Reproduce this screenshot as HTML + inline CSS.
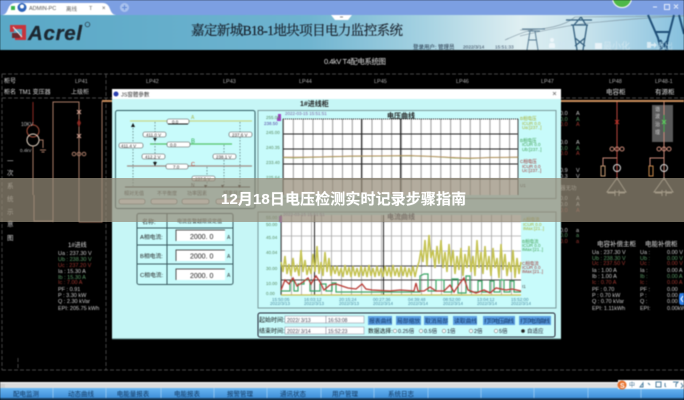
<!DOCTYPE html>
<html lang="zh"><head><meta charset="utf-8"><title>12月18日电压检测实时记录步骤指南</title>
<style>
html,body{margin:0;padding:0;background:#000;width:684px;height:400px;overflow:hidden}
svg{position:absolute;left:0;top:0;display:block}
#m{filter:blur(.55px)}
text{font-family:"Liberation Sans","Noto Sans CJK SC",sans-serif}
.s{font-family:"Liberation Serif","Noto Serif CJK SC",serif}
.w{fill:#ddd;font-size:6px}
.b{fill:#1c2c50;font-size:6.5px}
#band{position:absolute;left:0;top:178px;width:684px;height:44px;background:rgba(150,140,120,.72)}
#title{position:absolute;left:221px;top:189px;width:250px;white-space:nowrap;color:#fff;font:bold 15px/22px "Liberation Sans","Noto Sans CJK SC",sans-serif;letter-spacing:.1px;text-shadow:0 0 1px rgba(255,255,255,.5)}
</style></head><body>
<svg id="m" width="684" height="400" viewBox="0 0 684 400" xmlns="http://www.w3.org/2000/svg">
<defs>
<linearGradient id="h" x1="0" x2="1" y1="0" y2="0">
<stop offset="0" stop-color="#5aa8c6"/><stop offset=".45" stop-color="#6fb4d0"/><stop offset=".62" stop-color="#a5d2e2"/><stop offset=".76" stop-color="#dfeff2"/><stop offset=".86" stop-color="#c6e2ec"/><stop offset="1" stop-color="#86c0de"/>
</linearGradient>
<linearGradient id="t" x1="0" x2="0" y1="0" y2="1"><stop offset="0" stop-color="#69b6f2"/><stop offset="1" stop-color="#3f8fd8"/></linearGradient>
<pattern id="g1" x="283" y="0" width="9.83" height="400" patternUnits="userSpaceOnUse"><rect width="1" height="400" fill="#9a9a9a"/></pattern>
<pattern id="g2" x="281" y="0" width="10" height="400" patternUnits="userSpaceOnUse"><rect width="1" height="400" fill="#b4b4b4"/></pattern>
</defs>
<rect width="684" height="400" fill="#000"/>
<!-- top bar -->
<rect width="684" height="15" fill="#7c9fe2"/>
<path d="M2 15Q6 15 8 9Q10 3 15 3H103Q108 3 110 9Q112 15 116 15Z" fill="#fff"/>
<rect x="11" y="6" width="4" height="4" fill="#39b54a"/>
<circle cx="22" cy="7.500" r="4.500" fill="#2c62b8"/><circle cx="22" cy="6.500" r="2" fill="#fff"/>
<text x="29" y="10" font-size="5.500" fill="#555">ADMIN-PC</text>
<text x="66" y="11" font-size="5.500" fill="#666">离线</text>
<text x="89" y="10" font-size="5.500" fill="#666">T</text><text x="102" y="10" font-size="6" fill="#555">×</text>
<circle cx="124.500" cy="7.500" r="4.500" fill="#a9c2ee"/><path d="M122 7.500h5M124.500 5v5" stroke="#5f86d4" stroke-width="1"/>
<circle cx="622" cy="-2" r="9.500" fill="#4eb848" stroke="#fff" stroke-width="1"/>
<path d="M653 7h4M664.500 4.500h5v5h-5zM674 4.500l4 4M678 4.500l-4 4" stroke="#e6eefc" stroke-width="1" fill="none"/>
<!-- header -->
<rect y="15" width="684" height="35" fill="url(#h)"/>
<path d="M331 15H352L348 20H335Z" fill="#fff"/><path d="M340 17h3" stroke="#888"/>
<!-- towers -->
<g fill="none" stroke="#3e6484" stroke-width="1">
<path d="M520 36Q570 24 600 22Q640 18 684 16M520 30Q560 30 575 17M575 17L684 16M505 40Q525 31 533 30" stroke="#7a8f9c" stroke-width=".6"/>
<path d="M522 29H545M528 31H540M530 31L527 50M535 31L538 50M528 40H537" stroke="#5a7d94"/>
<path d="M566 20H592M571 25H588M574 25L581 17M586 25L581 17M573 25L577 50M587 25L583 50M575 38L585 46M585 38L575 46" stroke="#35607f" stroke-width="1.300"/>
<path d="M648 15L658 38L661 50M674 15L668 38L666 50M656 32H670M660 40L668 50M668 40L660 50M679 15L684 34" stroke="#1f4f78" stroke-width="2"/>
</g>
<!-- logo -->
<path d="M10 25H26V40H15V36H22V29H14V32H10Z" fill="#c8343c"/><path d="M12 33H20V38H12Z" fill="#6d2a30"/><path d="M13 27L22 37" stroke="#eee" stroke-width="1"/>
<text x="28" y="40" font-size="20.500" font-weight="bold" font-style="italic" fill="#1c2730" stroke="#1c2730" stroke-width=".3" textLength="54">Acrel</text>
<circle cx="87.500" cy="24.500" r="2.300" fill="none" stroke="#24313c" stroke-width=".7"/>
<text class="s" x="191" y="35" font-size="13.500" fill="#141a24" stroke="#141a24" stroke-width=".15" textLength="212" lengthAdjust="spacing">嘉定新城B18-1地块项目电力监控系统</text>
<text x="413" y="49" font-size="5.500" fill="#1d2c40">登录用户: 管理员</text>
<text x="463" y="48.500" font-size="4.800" fill="#2c3c50">2022/3/14</text><text x="495" y="48.500" font-size="4.800" fill="#3c5068">15:51:33</text>
<path d="M549 48V45Q549 43 551 43H553Q555 43 555 45V48ZM550 40a2 2 0 1 0 4 0a2 2 0 1 0-4 0" fill="#edf6fa"/>
<text x="557" y="49" font-size="9" fill="#cfe6f0">登录</text>
<rect x="595" y="43" width="7" height="6" fill="#e8f3f8"/><text x="603" y="49" font-size="9" fill="#cfe6f0">最小化</text>
<path d="M647 42h4v2h3v-2l3 3-3 3v-2h-3v2h-4z" fill="#d8ebf4"/><text x="656" y="49" font-size="8.500" fill="#b5d8e8">退出</text>
<!-- schematic frame -->
<text x="324" y="64" font-size="7.500" fill="#ddd" textLength="62">0.4kV T4配电系统图</text>
<g stroke="#5c5c5c" stroke-width=".7" stroke-dasharray="4 2" fill="none">
<path d="M2 74H684M2 98H684M2 370H684M2 74V370M106 74V370M18 358V370"/>
</g>
<text x="4" y="83" font-size="6" fill="#ddd">柜号</text><text x="4" y="94" font-size="6" fill="#ddd">柜名</text><text x="19" y="94" font-size="6" fill="#ddd">TM1 变压器</text>
<text x="75" y="83" font-size="5.500" fill="#aaa">LP41</text><text x="71" y="94" font-size="6" fill="#ccc">上级柜</text>
<text x="146" y="83" font-size="5.500" fill="#aaa">LP42</text><text x="223" y="83" font-size="5.500" fill="#aaa">LP43</text><text x="299" y="83" font-size="5.500" fill="#aaa">LP44</text><text x="374" y="83" font-size="5.500" fill="#aaa">LP45</text><text x="456" y="83" font-size="5.500" fill="#aaa">LP46</text><text x="541" y="83" font-size="5.500" fill="#aaa">LP47</text>
<text x="609" y="83" font-size="5.500" fill="#aaa">LP48</text><text x="655" y="83" font-size="5.500" fill="#aaa">LP48-1</text>
<text x="606" y="94" font-size="6.500" fill="#ddd">电容柜</text><text x="655" y="94" font-size="6.500" fill="#ddd">有源柜</text>
<!-- left schematic -->
<path d="M102 101H684" stroke="#c98d5c" stroke-width="2"/>
<g fill="none" stroke="#a87a66" stroke-width="1">
<path d="M53 222V102H79V222M79 222H102V101M34 195V221H53"/>
<path d="M33 102V125" stroke="#8b2a22"/>
<circle cx="33" cy="131" r="6" stroke="#a8503c"/><circle cx="33" cy="140" r="6" stroke="#e8d8c8"/>
<path d="M33 146V195M39 140H43V148M40 150H46M41.500 152H44.500"/>
<path d="M79 112l-2-2M79 112l2-2M79 112l-2 2M79 112l2 2M79 136l-2-2M79 136l2-2M79 136l-2 2M79 136l2 2" stroke="#d8a898"/>
<path d="M79 120l-1.500 3 1.500 3 1.500-3z" fill="#8b2a22" stroke="#8b2a22"/>
<circle cx="74" cy="154" r="1.800"/><circle cx="79" cy="154" r="1.800"/><circle cx="84" cy="154" r="1.800"/>
</g>
<text x="21" y="126" font-size="5" fill="#bbb">10KV</text><text x="20" y="152" font-size="4.500" fill="#bbb">0.4kV</text>
<g font-size="6.500" fill="#ccc"><text x="7" y="163">一</text><text x="7" y="175">次</text><text x="7" y="188">系</text><text x="7" y="201">统</text><text x="7" y="214">示</text><text x="7" y="226">意</text><text x="7" y="240">图</text></g>
<text x="68" y="247" class="w">1#进线</text>
<g font-size="5.500"><text x="58" y="255" fill="#ccc">Ua :  237.30 V</text><text x="58" y="261" fill="#5c9c68">Ub :  238.30 V</text><text x="58" y="267" fill="#a03830">Uc :  237.20 V</text><text x="58" y="273" fill="#ccc">Ia :   15.30 A</text><text x="58" y="279" fill="#5c9c68">Ib :   15.30 A</text><text x="58" y="284" fill="#a03830">Ic :    7.00 A</text><text x="58" y="291" fill="#ccc">PF :     0.91</text><text x="58" y="297" fill="#ccc">P  :    3.30 kW</text><text x="58" y="303" fill="#ccc">Q  :    2.30 kVar</text><text x="58" y="310" fill="#ccc">EPI:  205.75 kWh</text></g>
<!-- right schematic -->
<g font-size="5.500">
<text x="560" y="115" fill="#ccc">0.0</text><text x="576" y="115" fill="#ccc">A</text><text x="560" y="121" fill="#5c9c68">0.0</text><text x="576" y="121" fill="#5c9c68">A</text><text x="560" y="126" fill="#a03830">0.0</text><text x="576" y="126" fill="#a03830">A</text>
<text x="560" y="144" fill="#ccc">0.0</text><text x="576" y="144" fill="#ccc">A</text><text x="560" y="150" fill="#5c9c68">0.0</text><text x="576" y="150" fill="#5c9c68">A</text><text x="560" y="155" fill="#a03830">0.0</text><text x="576" y="155" fill="#a03830">A</text>
<text x="560" y="172" fill="#ccc">0.9</text><text x="576" y="172" fill="#ccc">V</text><text x="560" y="178" fill="#ccc">0.3</text><text x="576" y="178" fill="#ccc">V</text><text x="560" y="190" fill="#ccc">器无功</text>
<text x="560" y="200" fill="#ccc">0.0</text><text x="576" y="200" fill="#ccc">A</text><text x="560" y="206" fill="#ccc">0.0</text><text x="576" y="206" fill="#ccc">A</text><text x="560" y="212" fill="#a03830">0.0</text><text x="576" y="212" fill="#a03830">A</text>
<text x="560" y="232" fill="#ccc">0.0</text><text x="576" y="232" fill="#ccc">a</text><text x="560" y="237" fill="#5c9c68">0.0</text><text x="576" y="237" fill="#5c9c68">a</text><text x="560" y="243" fill="#a03830">0.0</text><text x="576" y="243" fill="#a03830">a</text>
</g>
<rect x="652" y="105" width="21" height="37" fill="#5a5a5a"/>
<g font-size="5" fill="#ccc"><text x="655" y="111">谐</text><text x="655" y="118">波</text><text x="655" y="126">治</text><text x="655" y="134">理</text></g>
<g fill="none" stroke="#c98a78" stroke-width="1">
<path d="M617 102V180" stroke="#b6473c"/><path d="M664 102V115"/><path d="M664 115V132" stroke="#44b04e"/><path d="M664 132V180"/>
<path d="M615 120l4 4M619 120l-4 4" stroke="#c03028"/><path d="M662 120l4 4M666 120l-4 4" stroke="#5fd05f"/>
<circle cx="612" cy="149" r="2"/><circle cx="617" cy="149" r="2"/><circle cx="622" cy="149" r="2"/><circle cx="659" cy="149" r="2"/><circle cx="664" cy="149" r="2"/><circle cx="669" cy="149" r="2"/>
<circle cx="617" cy="168" r="3.500" stroke="#ddd"/><circle cx="664" cy="168" r="3.500" stroke="#ddd"/>
<path d="M617 158H603V166M664 158H650V166"/><rect x="601" y="166" width="4" height="10" stroke="#c49a72"/><rect x="649" y="166" width="4" height="10" stroke="#c98a4a"/>
<path d="M617 178L607 192H626ZM664 178L654 192H673Z" stroke="#c0b8a8"/><path d="M608 192V193H615M619 193H625M655 193H662M666 193H672M615 190V196M619 190V196M662 190V196M666 190V196" stroke="#c0b8a8"/>
</g>
<text x="597" y="246" font-size="6.500" fill="#ddd">电容补偿主柜</text><text x="645" y="246" font-size="6.500" fill="#ddd">电能补偿柜</text>
<g font-size="5.500">
<text x="592" y="254" fill="#ccc">Ua :  237.30 V</text><text x="592" y="260" fill="#5c9c68">Ub :  238.30 V</text><text x="592" y="265" fill="#a03830">Uc :  237.50 V</text><text x="592" y="272" fill="#ccc">Ia :    1.00 A</text><text x="592" y="278" fill="#ccc">Ib :    1.00 A</text><text x="592" y="284" fill="#a03830">Ic :    0.70 A</text><text x="592" y="291" fill="#ccc">PF :    0.70</text><text x="592" y="297" fill="#ccc">P  :    0.70 kW</text><text x="592" y="303" fill="#ccc">Q  :    0.70 kVar</text><text x="592" y="310" fill="#ccc">EPI:    1.11kWh</text>
<text x="640" y="254" fill="#ccc">Ua :</text><text x="667" y="254" fill="#ccc">0.00 V</text><text x="640" y="260" fill="#5c9c68">Ub :</text><text x="667" y="260" fill="#5c9c68">0.00 V</text><text x="640" y="265" fill="#a03830">Uc :</text><text x="667" y="265" fill="#a03830">0.00 V</text><text x="640" y="272" fill="#ccc">Ia :</text><text x="667" y="272" fill="#ccc">0.00 A</text><text x="640" y="278" fill="#5c9c68">Ib :</text><text x="667" y="278" fill="#5c9c68">0.00 A</text><text x="640" y="284" fill="#a03830">Ic :</text><text x="667" y="284" fill="#a03830">0.00 A</text><text x="640" y="291" fill="#ccc">PF :</text><text x="667" y="291" fill="#ccc">0.00</text><text x="640" y="297" fill="#ccc">P  :</text><text x="667" y="297" fill="#ccc">0.00 kW</text><text x="640" y="303" fill="#ccc">Q  :</text><text x="667" y="303" fill="#ccc">0.00 kVar</text><text x="640" y="310" fill="#ccc">EPI:</text><text x="667" y="310" fill="#ccc">0.00kWh</text>
</g>
<path d="M684 293H682Q679 293 679 296V302Q679 305 682 305H684Z" fill="#2f7fe8"/><path d="M683 296l-2 3 2 3" stroke="#fff" fill="none"/>
<!-- bottom -->
<rect y="382" width="684" height="1.500" fill="#f2f2f2"/>
<rect y="383.500" width="684" height="5" fill="#cfcfcf"/><rect x="5" y="384" width="658" height="4" fill="#dcdcdc"/>
<rect y="388" width="684" height="10" fill="url(#t)"/><rect y="398" width="684" height="2" fill="#1a4266"/>
<path d="M53 388v10M106 388v10M161 388v10M214 388v10M267 388v10M321 388v10M374 388v10M428 388v10M481 388v10M534 388v10M588 388v10M641 388v10" stroke="#a6d2f6" stroke-width=".7"/>
<g font-size="6.500" fill="#10345c" text-anchor="middle"><text x="26" y="396">配电监测</text><text x="81" y="396">动态曲线</text><text x="133" y="396">电能量报表</text><text x="187" y="396">电能报表</text><text x="240" y="396">报警管理</text><text x="293" y="396">通讯状态</text><text x="345" y="396">用户管理</text><text x="401" y="396">系统日志</text></g>
<rect x="618" y="380" width="66" height="9" fill="#fff"/>
<circle cx="622" cy="385" r="4.500" fill="#e8702a"/><text x="620" y="388" font-size="7" font-weight="bold" fill="#fff">S</text>
<g font-size="6" fill="#3f6f90"><text x="629" y="387">中</text></g>
<path d="M640 387l3-4v4zM648 383l2 2M656 382h5v5h-5zM665 383v3l1 1M673 382h5l-2 2v3M681 383l2 3-2 2" stroke="#4f7f9f" fill="none" stroke-width="1"/>
<!-- dialog -->
<rect x="112" y="89" width="449" height="250" fill="#c6f6f6"/>
<rect x="112" y="89" width="449" height="10" fill="#fff"/>
<path d="M112 339H561" stroke="#4a6a6a"/>
<circle cx="116" cy="94" r="2.500" fill="#2a3fb0"/><text x="121" y="96.500" font-size="5.500" fill="#333">JS窗體參數</text>
<path d="M553 92l3 3M556 92l-3 3" stroke="#777" stroke-width=".8"/>
<!-- left panel -->
<rect x="115.500" y="110.500" width="139.500" height="98" rx="2" fill="#c8fbfb" stroke="#2f5a60"/>
<path d="M130 121H252" stroke="#c9d98a" stroke-width="1.200"/><path d="M150 144H232" stroke="#55c46a" stroke-width="1.200"/><path d="M127 166H252" stroke="#a08a84" stroke-width="1.200"/><path d="M125 187H250" stroke="#444" stroke-width="1"/>
<path d="M133 128V186M155 122V166M207 167V186M224 145V186M240 122V186" stroke="#789a9c" stroke-dasharray="1.500 1.500" fill="none"/>
<path d="M133 123l-2 4h4zM155 141l-2-3h4zM155 166l-2-4h4zM204 185h3l-1.500 3zM224 185h-3l1.500 3zM241 185h-3l1.500 3z" fill="#111"/>
<g fill="#fff" stroke="#555" stroke-width=".6"><rect x="167" y="119" width="22" height="5" rx="2"/><rect x="143" y="132" width="23" height="5" rx="2"/><rect x="229" y="132" width="23" height="5" rx="2"/><rect x="119" y="143" width="24" height="5" rx="2"/><rect x="167" y="142" width="23" height="5" rx="2"/><rect x="142" y="154" width="23" height="5" rx="2"/><rect x="213" y="154" width="23" height="5" rx="2"/><rect x="166" y="164" width="22" height="5" rx="2"/><rect x="192" y="176" width="23" height="5" rx="2"/></g>
<path d="M168 124H188" stroke="#111"/>
<g font-size="4.500" fill="#333"><text x="172" y="123.500">0.0</text><text x="146" y="136.500">411.0  V</text><text x="232" y="136.500">237.6  V</text><text x="121" y="147.500">411.4  V</text><text x="170" y="146.500">0.0</text><text x="145" y="158.500">412.2  V</text><text x="216" y="158.500">238.1  V</text><text x="173" y="168.500">7.0</text><text x="195" y="180.500">237.5  V</text></g>
<text x="191" y="119" font-size="5" fill="#a8b850">A</text><text x="191" y="143" font-size="6" fill="#30b050">B</text><text x="191" y="166" font-size="5.500" fill="#c03020">C</text><text x="191" y="187" font-size="5" fill="#333">N</text>
<g font-size="5" fill="#333"><text x="124" y="195">相对无值</text><text x="157" y="195">不平衡度</text><text x="187" y="195">功率因素</text><text x="223" y="195">频率显示</text></g>
<g fill="#fff" stroke="#555" stroke-width=".5"><rect x="119" y="199" width="26" height="5" rx="2"/><rect x="151" y="199" width="26" height="5" rx="2"/><rect x="182" y="199" width="27" height="5" rx="2"/><rect x="216" y="199" width="26" height="5" rx="2"/></g>
<!-- table -->
<rect x="137" y="213.500" width="96" height="71" rx="2" fill="#c8fbfb" stroke="#3a5a60"/>
<path d="M167 214V284M137 228H233M137 245H233M137 264H233" stroke="#3a5a60"/>
<text x="142" y="224" font-size="6" fill="#222">名称:</text><text x="177" y="223" font-size="5" fill="#333">电流告警越限设定值</text>
<text x="140" y="239" font-size="5.800" fill="#222">A相电流:</text><text x="140" y="258" font-size="5.800" fill="#222">B相电流:</text><text x="140" y="277" font-size="5.800" fill="#222">C相电流:</text>
<g fill="#fff"><rect x="176" y="230" width="49" height="11"/><rect x="176" y="250" width="49" height="11"/><rect x="176" y="269" width="49" height="11"/></g>
<path d="M176 241V230H225M176 261V250H225M176 280V269H225" stroke="#555" fill="none"/>
<g font-size="7" fill="#222"><text x="190" y="239">2000. 0</text><text x="190" y="258.500">2000. 0</text><text x="190" y="278">2000. 0</text></g>
<g font-size="5" fill="#333"><text x="227" y="239">A</text><text x="227" y="258">A</text><text x="227" y="277">A</text></g>
<!-- chart 1 -->
<text x="300" y="106" font-size="7" font-weight="bold" fill="#222">1#进线柜</text>
<rect x="258" y="110.500" width="298" height="88" fill="#c8fbfb" stroke="#7a9a9c"/>
<rect x="283" y="119" width="235" height="76" fill="#fff"/><rect x="283" y="119" width="235" height="76" fill="url(#g1)"/>
<path d="M283 119H518" stroke="#111" stroke-dasharray="1 1"/>
<path d="M283 134H518M283 149H518M283 164H518M283 179H518" stroke="#222" stroke-width="1"/>
<path d="M361.500 119V195M400.500 119V195" stroke="#222"/>
<path d="M283 119V195M518 119V195" stroke="#444"/>
<path d="M283 157.500L295 157.800L310 157.300L330 156.800L350 156.200L380 156L410 155.800L430 156.400L445 157.300L455 158L470 158.400L490 157.500L518 157.300" fill="none" stroke="#8fa050" stroke-width="1"/>
<path d="M283 157L310 157L350 156L410 155.500L445 157L470 158L518 157" fill="none" stroke="#c67a5a" stroke-width=".5"/>
<text x="387" y="118" font-size="7" font-weight="bold" fill="#222">电压曲线</text>
<rect x="278" y="114" width="3" height="6" fill="#a040c0"/><rect x="277" y="118" width="4" height="3" fill="#a040c0"/>
<text x="285" y="115" font-size="4.500" fill="#7a60a0">2022-03-15 15:51:51</text>
<g font-size="4.500" fill="#5a8a60"><text x="266" y="119">255.00</text><text x="266" y="134">245.00</text><text x="266" y="149">240.35</text><text x="266" y="164">233.40</text><text x="266" y="179">225.64</text></g>
<text x="264" y="125" font-size="4.500" fill="#5040a0">238.50</text>
<g font-size="4.500"><text x="520" y="120" fill="#a8b030">B相电压</text><text x="522" y="125" fill="#a8b030">ICUR 0.0</text><text x="522" y="129" fill="#a8b030">Ua:[237..]</text><text x="520" y="142" fill="#40a050">B相电压</text><text x="522" y="146" fill="#40a050">ICUR 0.0</text><text x="522" y="151" fill="#40a050">Ub:[237..]</text><text x="520" y="163" fill="#a03030">C相电压</text><text x="522" y="168" fill="#a03030">ICUR 0.0</text><text x="522" y="172" fill="#a03030">Uc:[237..]</text><text x="520" y="187" fill="#444">U1</text></g>
<!-- chart 2 -->
<rect x="258" y="212" width="298" height="96" fill="#c8fbfb" stroke="#7a9a9c"/>
<rect x="281" y="215" width="240" height="80" fill="#fff"/><rect x="281" y="215" width="240" height="80" fill="url(#g2)"/>
<path d="M281 222H521M281 236H521M281 251H521" stroke="#aaa" stroke-width=".8"/>
<path d="M281 266H521M281 280H521" stroke="#444" stroke-width=".9"/>
<path d="M314.500 215V295M383.500 215V295" stroke="#222"/>
<path d="M281 215V295" stroke="#444"/>
<polyline fill="none" stroke="#c4c250" stroke-width="1.500" points="281,262 283,272 285,256 287,274 289,264 291,276 293,258 295,272 297,266 299,276 301,250 303,272 305,260 307,275 309,266 311,274 313,254 315,272 317,246 319,274 321,262 323,276 325,252 327,272 329,258 331,276 333,266 335,274 337,266 339,276 341,268 343,277 345,265 347,275 349,267 351,277 353,266 355,276 357,268 359,277 361,266 363,276 365,267 367,277 369,265 371,276 373,268 375,277 377,266 379,276 381,268 383,277 385,266 387,276 389,267 391,277 393,265 395,276 397,268 399,277 401,266 403,276 405,267 407,277 409,268 411,276 413,266 415,277 417,268 419,262 421,250 423,262 425,240 427,266 429,235 431,258 433,250 435,268 437,246 439,264 441,240 443,268 445,252 447,272 449,244 451,266 453,250 455,274 457,256 459,270 461,248 463,276 465,254 467,268 469,246 471,272 473,256 475,276 477,240 479,268 481,252 483,274 485,246 487,270 489,256 491,276 493,248 495,268 497,258 499,278 501,244 503,270 505,254 507,276 509,262 511,272 513,250 515,278 517,258 519,274 521,262"/>
<polyline fill="none" stroke="#3aa566" stroke-width="1.200" points="281,291 290,291 290,281 294,281 294,291 298,291 298,284 304,284 304,280 310,280 310,291 320,291 320,284 326,284 326,291 332,291 332,283 336,283 336,292 420,292 420,276 424,274 428,274 428,291 436,291 436,280 444,280 444,292 452,292 452,279 458,279 458,293 466,293 466,276 470,276 470,292 478,292 478,281 482,281 482,292 490,292 490,281 494,281 494,292 500,292 500,280 504,280 504,292 510,292 510,281 514,281 514,292 521,292"/>
<polyline fill="none" stroke="#b83a34" stroke-width="1.300" points="281,290 285,280 289,284 293,278 297,286 303,282 308,278 311,284 316,276 320,282 324,290 330,285 336,284 342,286 348,288 356,289 362,284 366,289 372,290 390,291 400,290 414,291 416,283 418,291 424,291 430,287 436,291 444,291 450,285 454,292 460,283 464,278 468,290 476,293 484,290 490,293 496,288 506,290 512,289 521,291"/>
<rect x="279" y="216" width="3" height="6" fill="#a040c0"/>
<text x="283" y="216" font-size="4.500" fill="#8a70a0">2022-03-15 15:51:51</text>
<text x="387" y="219" font-size="7" font-weight="bold" fill="#445">电流曲线</text>
<path d="M281 295H521" stroke="#c8c050" stroke-width="1.200"/>
<g font-size="4.500" fill="#5a8a60"><text x="266" y="219">55.00</text><text x="266" y="226">50.00</text><text x="266" y="239">45.04</text><text x="266" y="254">40.04</text><text x="266" y="270">30.00</text><text x="266" y="285">10.00</text><text x="266" y="295">0.00</text></g>
<g font-size="4.500" fill="#4a8aa0"><text x="272" y="301">15:50:05</text><text x="270" y="305">2022/3/13</text><text x="304" y="301">16:03:12</text><text x="304" y="305">2022/3/13</text><text x="339" y="301">20:15:24</text><text x="339" y="305">2022/3/13</text><text x="373" y="301">00:27:36</text><text x="373" y="305">2022/3/14</text><text x="408" y="301">04:39:48</text><text x="408" y="305">2022/3/14</text><text x="443" y="301">08:52:00</text><text x="443" y="305">2022/3/14</text><text x="477" y="301">13:04:12</text><text x="477" y="305">2022/3/14</text><text x="511" y="301">15:52:00</text><text x="511" y="305">2022/3/14</text></g>
<g font-size="4.500"><text x="523" y="221" fill="#a8b030">A相电流</text><text x="523" y="226" fill="#a8b030">ICUR 0.0</text><text x="523" y="230" fill="#a8b030">IMax:[21..]</text><text x="522" y="243" fill="#40a050">B相电流</text><text x="522" y="247" fill="#40a050">ICUR 0.0</text><text x="522" y="251" fill="#40a050">IMax:[21..]</text><text x="522" y="265" fill="#a03030">C相电流</text><text x="522" y="269" fill="#a03030">ICUR 0.0</text><text x="522" y="273" fill="#a03030">IMax:[21..]</text><text x="522" y="288" fill="#444">I1</text></g>
<!-- controls -->
<rect x="258" y="313" width="297" height="24" rx="2" fill="#c8fbfb" stroke="#223"/>
<g class="b"><text x="259" y="322" font-size="6" fill="#111">起始时间:</text><text x="259" y="333" font-size="6" fill="#111">结束时间:</text></g>
<g fill="#fff" stroke="#889" stroke-width=".5"><rect x="285" y="316" width="41" height="7"/><rect x="326" y="316" width="38" height="7" /><rect x="285" y="327" width="41" height="7"/><rect x="326" y="327" width="38" height="7"/></g>
<g font-size="5" fill="#445"><text x="287" y="322">2022/ 3/13</text><text x="328" y="322">16:53:08</text><text x="287" y="333">2022/ 3/14</text><text x="328" y="333">15:52:23</text></g>
<g fill="#5b9fe2"><rect x="368" y="316" width="24" height="9"/><rect x="396" y="316" width="25" height="9"/><rect x="424" y="316" width="24" height="9"/><rect x="453" y="316" width="24" height="9"/><rect x="483" y="316" width="32" height="9"/><rect x="519" y="316" width="32" height="9"/></g>
<g font-size="5.800" fill="#103060"><text x="369" y="323">报表曲线</text><text x="397" y="323">局部缩放</text><text x="425" y="323">取消局部</text><text x="454" y="323">读取曲线</text><text x="484" y="323" textLength="30">打印电压曲线</text><text x="520" y="323" textLength="30">打印电流曲线</text></g>
<text x="368" y="333" font-size="5.800" fill="#111">数据选择:</text>
<g fill="#fff" stroke="#666" stroke-width=".5"><circle cx="395" cy="331" r="1.800"/><circle cx="421" cy="331" r="1.800"/><circle cx="444" cy="331" r="1.800"/><circle cx="471" cy="331" r="1.800"/><circle cx="496" cy="331" r="1.800"/></g>
<circle cx="523" cy="331" r="1.800" fill="#222"/>
<g font-size="5.500" fill="#223"><text x="398" y="333">0.25倍</text><text x="424" y="333">0.5倍</text><text x="447" y="333">1倍</text><text x="474" y="333">2倍</text><text x="499" y="333">5倍</text><text x="527" y="333">自适应</text></g>
</svg>
<div id="band"></div>
<div id="title">12月18日电压检测实时记录步骤指南</div>
</body></html>
